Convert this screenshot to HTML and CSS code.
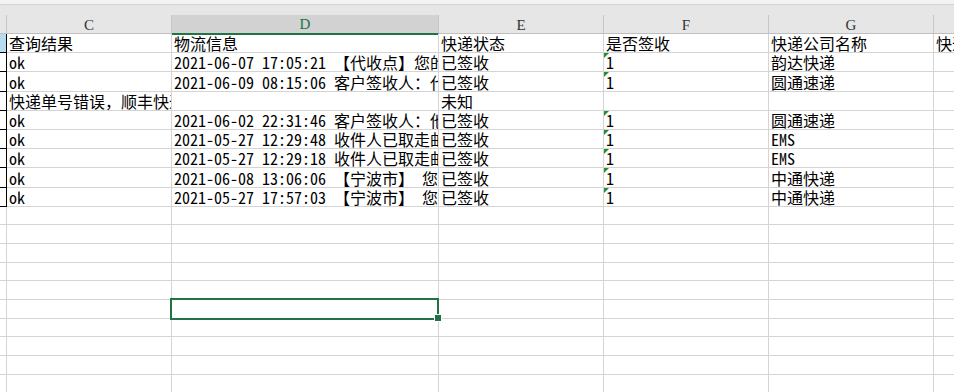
FILE: index.html
```html
<!DOCTYPE html>
<html>
<head>
<meta charset="utf-8">
<link rel="stylesheet" href="styles.css">
</head>
<body>
<div class="sheet">
  <div class="formula-edge"></div>
  <div class="band"></div>
  <div class="colheads">
    <div class="ch ch-b"></div>
    <div class="ch">C</div>
    <div class="ch active">D</div>
    <div class="ch">E</div>
    <div class="ch">F</div>
    <div class="ch">G</div>
    <div class="ch ch-h"></div>
  </div>
  <div class="grid">
    <div class="c b first"></div><div class="c">查询结果</div><div class="c">物流信息</div><div class="c">快递状态</div><div class="c">是否签收</div><div class="c">快递公司名称</div><div class="c last">快递单号</div>

    <div class="c b"></div><div class="c">ok</div><div class="c">2021-06-07 17:05:21 【代收点】您的快件已签收</div><div class="c">已签收</div><div class="c flag">1</div><div class="c">韵达快递</div><div class="c last"></div>

    <div class="c b"></div><div class="c">ok</div><div class="c">2021-06-09 08:15:06 客户签收人：代收点已签收</div><div class="c">已签收</div><div class="c flag">1</div><div class="c">圆通速递</div><div class="c last"></div>

    <div class="c b"></div><div class="c">快递单号错误，顺丰快递请输入手机号</div><div class="c"></div><div class="c">未知</div><div class="c"></div><div class="c"></div><div class="c last"></div>

    <div class="c b"></div><div class="c">ok</div><div class="c">2021-06-02 22:31:46 客户签收人：他人代收</div><div class="c">已签收</div><div class="c flag">1</div><div class="c">圆通速递</div><div class="c last"></div>

    <div class="c b"></div><div class="c">ok</div><div class="c">2021-05-27 12:29:48 收件人已取走邮件</div><div class="c">已签收</div><div class="c flag">1</div><div class="c">EMS</div><div class="c last"></div>

    <div class="c b"></div><div class="c">ok</div><div class="c">2021-05-27 12:29:18 收件人已取走邮件</div><div class="c">已签收</div><div class="c flag">1</div><div class="c">EMS</div><div class="c last"></div>

    <div class="c b"></div><div class="c">ok</div><div class="c">2021-06-08 13:06:06 【宁波市】 您的快件已签收</div><div class="c">已签收</div><div class="c flag">1</div><div class="c">中通快递</div><div class="c last"></div>

    <div class="c b"></div><div class="c">ok</div><div class="c">2021-05-27 17:57:03 【宁波市】 您的快件已签收</div><div class="c">已签收</div><div class="c flag">1</div><div class="c">中通快递</div><div class="c last"></div>
  </div>
  <div class="grid empty">
    <div class="c b2 tail"></div><div class="c"></div><div class="c"></div><div class="c"></div><div class="c"></div><div class="c"></div><div class="c last"></div>
    <div class="c b2"></div><div class="c"></div><div class="c"></div><div class="c"></div><div class="c"></div><div class="c"></div><div class="c last"></div>
    <div class="c b2"></div><div class="c"></div><div class="c"></div><div class="c"></div><div class="c"></div><div class="c"></div><div class="c last"></div>
    <div class="c b2"></div><div class="c"></div><div class="c"></div><div class="c"></div><div class="c"></div><div class="c"></div><div class="c last"></div>
    <div class="c b2"></div><div class="c"></div><div class="c"></div><div class="c"></div><div class="c"></div><div class="c"></div><div class="c last"></div>
    <div class="c b2"></div><div class="c"></div><div class="c selected"></div><div class="c"></div><div class="c"></div><div class="c"></div><div class="c last"></div>
    <div class="c b2"></div><div class="c"></div><div class="c"></div><div class="c"></div><div class="c"></div><div class="c"></div><div class="c last"></div>
    <div class="c b2"></div><div class="c"></div><div class="c"></div><div class="c"></div><div class="c"></div><div class="c"></div><div class="c last"></div>
    <div class="c b2"></div><div class="c"></div><div class="c"></div><div class="c"></div><div class="c"></div><div class="c"></div><div class="c last"></div>
    <div class="c b2"></div><div class="c"></div><div class="c"></div><div class="c"></div><div class="c"></div><div class="c"></div><div class="c last"></div>
  </div>
</div>
</body>
</html>
```
FILE: styles.css
```css
* { box-sizing: border-box; }
html, body { margin: 0; padding: 0; background: #ffffff; }
body { width: 954px; height: 392px; overflow: hidden; }
.sheet {
  font-family: "Noto Sans Mono CJK SC", "Noto Sans CJK SC", "Liberation Mono", monospace;
  font-size: 16px;
  color: #000;
}
.formula-edge { height: 5px; background: #f3f3f3; border-bottom: 1px solid #d4d4d4; }
.band { height: 10px; background: #e6e6e6; }
.colheads {
  display: grid;
  grid-template-columns: 7px 165px 267px 165px 165px 165px 1fr;
  height: 19px;
  background: #e6e6e6;
  border-bottom: 1px solid #bfbfbf;
}
.ch {
  border-right: 1px solid #c6c6c6;
  display: flex; align-items: center; justify-content: center;
  font-family: "Liberation Serif", serif;
  font-size: 15px;
  color: #333;
  padding-top: 1px;
}
.ch.active {
  background: #d2d2d2;
  color: #217346;
  border-bottom: 2px solid #217346;
  margin-bottom: -1px;
  position: relative;
}
.ch-h { border-right: none; }
.grid {
  display: grid;
  grid-template-columns: 7px 165px 267px 165px 165px 165px 1fr;
  grid-auto-rows: 19.2px;
}
.grid.empty { grid-auto-rows: 18.67px; }
.c {
  border-right: 1px solid #d4d4d4;
  border-bottom: 1px solid #d4d4d4;
  white-space: nowrap;
  overflow: hidden;
  padding-left: 2px;
  line-height: 18px;
  display: flex; align-items: flex-end;
  position: relative;
}
.c.last { border-right: none; }
.c.b { border-right: 1px solid #000; border-bottom: 1px solid #000; padding: 0; }
.c.b.first { background: #b8dcef; }
.c.b2 { padding: 0; }
.c.b2.tail::before {
  content: "";
  position: absolute; right: -1px; top: 0;
  width: 1px; height: 7px;
  background: #000;
}
.flag::before {
  content: "";
  position: absolute; left: 0; top: 0;
  border-top: 5px solid #1f8f3a;
  border-right: 5px solid transparent;
}
.selected { overflow: visible; }
.selected::after {
  content: "";
  position: absolute;
  left: -2px; top: -2px; right: -1px; bottom: -2px;
  border: 2px solid #217346;
  z-index: 2;
}
.selected::before {
  content: "";
  position: absolute;
  right: -4px; bottom: -4px;
  width: 6px; height: 6px;
  background: #217346;
  border: 1px solid #fff;
  z-index: 3;
}
```
